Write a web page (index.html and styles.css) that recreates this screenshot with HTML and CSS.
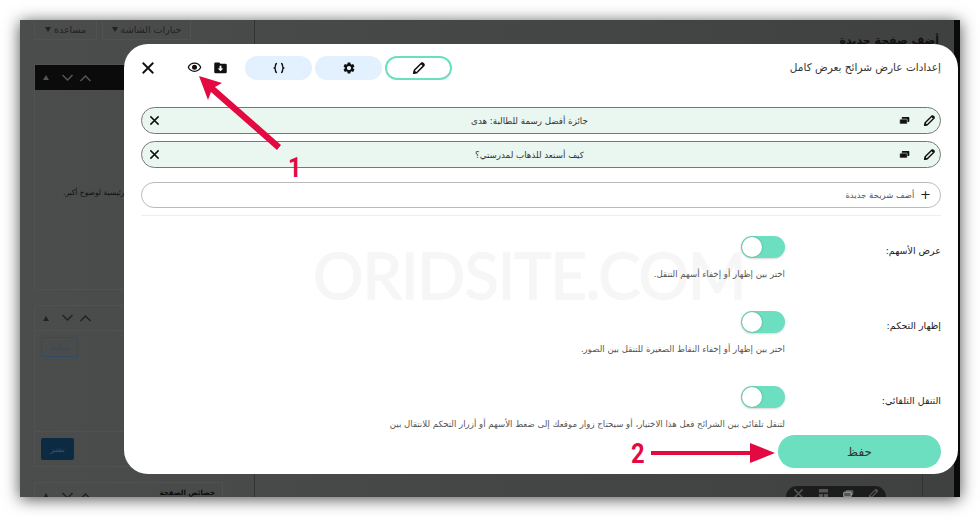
FILE: index.html
```html
<!DOCTYPE html>
<html lang="ar" dir="rtl">
<head>
    <meta charset="utf-8">
    <title>إعدادات عارض شرائح بعرض كامل</title>
    <link rel="stylesheet" href="styles.css">
</head>
<body>
    <!-- shared icons -->
    <svg class="icon-defs" width="0" height="0">
        <symbol id="i-close" viewBox="0 0 12 12"><path d="M1.5 1.5l9 9M10.5 1.5l-9 9" fill="none" stroke="currentColor" stroke-width="1.6"/></symbol>
        <symbol id="i-pencil" viewBox="0 0 24 24"><path d="M16.5 3.5l4 4L8 20l-5 1 1-5z" fill="none" stroke="currentColor" stroke-width="2.6" stroke-linejoin="round"/><path d="M2.5 21.5l1.2-6 4.8 4.8zM15 5l2-2.4a1.6 1.6 0 0 1 2.2 0l2.2 2.2a1.6 1.6 0 0 1 0 2.2L19 9z" fill="currentColor"/></symbol>
        <symbol id="i-copy" viewBox="0 0 16 12"><path d="M5 1h9a1 1 0 0 1 1 1v5a1 1 0 0 1-1 1H5a1 1 0 0 1-1-1V2a1 1 0 0 1 1-1z" fill="currentColor"/><path d="M2 4h9a1 1 0 0 1 1 1v5a1 1 0 0 1-1 1H2a1 1 0 0 1-1-1V5a1 1 0 0 1 1-1z" fill="currentColor" stroke="#eaf7f1" stroke-width=".8"/></symbol>
        <symbol id="i-grid" viewBox="0 0 12 12"><path d="M1 1h10v4H1zM1 6.500h4.500V11H1zM6.500 6.500H11V11H6.500z" fill="currentColor"/></symbol>
        <symbol id="i-up" viewBox="0 0 12 8"><path d="M1 7l5-5 5 5" fill="none" stroke="currentColor" stroke-width="1.5"/></symbol>
        <symbol id="i-down" viewBox="0 0 12 8"><path d="M1 1l5 5 5-5" fill="none" stroke="currentColor" stroke-width="1.5"/></symbol>
    </svg>

    <div class="screen">
        <div class="wp-page">
            <div class="wp-main">
                <div class="wp-heading">أضف صفحة جديدة</div>
                <div class="wp-blocktools">
                    <svg class="tool-ico"><use href="#i-pencil"/></svg>
                    <svg class="tool-ico"><use href="#i-copy"/></svg>
                    <svg class="tool-ico"><use href="#i-grid"/></svg>
                    <svg class="tool-ico"><use href="#i-close"/></svg>
                </div>
            </div>
            <div class="wp-side">
                <div class="wp-tabs">
                    <span class="wp-tab wp-tab-wide">خيارات الشاشة <i class="caret"></i></span>
                    <span class="wp-tab">مساعدة <i class="caret"></i></span>
                </div>
                <div class="wp-box wp-box-first">
                    <div class="wp-box-head wp-box-head-dark">
                        <svg class="chev"><use href="#i-up"/></svg>
                        <svg class="chev"><use href="#i-down"/></svg>
                        <i class="tri"></i>
                    </div>
                    <div class="wp-box-note">الصورة الرئيسية لوضوح أكبر.</div>
                </div>
                <div class="wp-box wp-box-publish">
                    <div class="wp-box-head">
                        <svg class="chev"><use href="#i-up"/></svg>
                        <svg class="chev"><use href="#i-down"/></svg>
                        <i class="tri"></i>
                    </div>
                    <div class="wp-box-body"><span class="wp-preview">معاينة</span></div>
                    <div class="wp-box-foot"><span class="wp-publish">نشر</span></div>
                </div>
                <div class="wp-box">
                    <div class="wp-box-head wp-box-head-title">
                        <span class="wp-box-title">خصائص الصفحة</span>
                        <svg class="chev"><use href="#i-up"/></svg>
                        <svg class="chev"><use href="#i-down"/></svg>
                        <i class="tri"></i>
                    </div>
                </div>
            </div>
        </div>

        <!-- slider settings modal -->
        <div class="modal">
            <div class="watermark" dir="ltr">ORIDSITE.COM</div>

            <div class="modal-head">
                <div class="modal-title">إعدادات عارض شرائح بعرض كامل</div>
                <div class="modal-tabs">
                    <span class="tab tab-active"><svg class="ico-14"><use href="#i-pencil"/></svg></span>
                    <span class="tab">
                        <svg class="ico-14" viewBox="0 0 24 24"><path fill="currentColor" d="M19.14 12.94c.04-.3.06-.61.06-.94 0-.32-.02-.64-.07-.94l2.03-1.58c.18-.14.23-.41.12-.61l-1.92-3.32c-.12-.22-.37-.29-.59-.22l-2.39.96c-.5-.38-1.03-.7-1.62-.94l-.36-2.54c-.04-.24-.24-.41-.48-.41h-3.84c-.24 0-.43.17-.47.41l-.36 2.54c-.59.24-1.13.57-1.62.94l-2.39-.96c-.22-.08-.47 0-.59.22L2.74 8.87c-.12.21-.08.47.12.61l2.03 1.58c-.05.3-.09.63-.09.94s.02.64.07.94l-2.03 1.58c-.18.14-.23.41-.12.61l1.92 3.32c.12.22.37.29.59.22l2.39-.96c.5.38 1.03.7 1.62.94l.36 2.54c.05.24.24.41.48.41h3.84c.24 0 .44-.17.47-.41l.36-2.54c.59-.24 1.13-.56 1.62-.94l2.39.96c.22.08.47 0 .59-.22l1.92-3.32c.12-.22.07-.47-.12-.61l-2.01-1.58zM12 15.6c-1.98 0-3.6-1.62-3.6-3.6s1.62-3.6 3.6-3.6 3.6 1.62 3.6 3.6-1.62 3.6-3.6 3.6z"/></svg>
                    </span>
                    <span class="tab">
                        <svg class="ico-braces" viewBox="0 0 12 12"><path d="M4 1.5c-1.5 0-1.5 1-1.5 2s0 2-1 2.5c1 .5 1 1.500 1 2.500s0 2 1.500 2M8 1.500c1.500 0 1.500 1 1.500 2s0 2 1 2.500c-1 .5-1 1.500-1 2.500s0 2-1.500 2" fill="none" stroke="currentColor" stroke-width="1.400"/></svg>
                    </span>
                </div>
                <div class="modal-actions">
                    <svg class="ico-15" viewBox="0 0 24 24"><path fill="currentColor" d="M10 4H4a2 2 0 0 0-2 2v13a2 2 0 0 0 2 2h16a2 2 0 0 0 2-2V8a2 2 0 0 0-2-2h-8z"/><path fill="#fff" d="M10.500 9h3v4.500H16.500L12 18l-4.500-4.500h3z"/></svg>
                    <svg class="ico-15" viewBox="0 0 24 24"><path fill="currentColor" d="M12 6a9.770 9.770 0 0 1 8.820 5.500C19.170 14.870 15.790 17 12 17s-7.170-2.130-8.820-5.500A9.770 9.770 0 0 1 12 6m0-2C7 4 2.730 7.110 1 11.500 2.730 15.890 7 19 12 19s9.270-3.110 11-7.500C21.270 7.110 17 4 12 4z"/><circle cx="12" cy="11.500" r="4" fill="currentColor"/></svg>
                    <svg class="ico-close"><use href="#i-close"/></svg>
                </div>
            </div>

            <div class="slides">
                <div class="slide">
                    <span class="slide-tools">
                        <svg class="ico-12"><use href="#i-pencil"/></svg>
                        <svg class="ico-copy"><use href="#i-copy"/></svg>
                    </span>
                    <span class="slide-name">جائزة أفضل رسمة للطالبة: هدى</span>
                    <svg class="ico-x"><use href="#i-close"/></svg>
                </div>
                <div class="slide">
                    <span class="slide-tools">
                        <svg class="ico-12"><use href="#i-pencil"/></svg>
                        <svg class="ico-copy"><use href="#i-copy"/></svg>
                    </span>
                    <span class="slide-name">كيف أستعد للذهاب لمدرستي؟</span>
                    <svg class="ico-x"><use href="#i-close"/></svg>
                </div>
                <div class="slide-add"><span class="plus">+</span> أضف شريحة جديدة</div>
            </div>

            <div class="settings">
                <div class="setting">
                    <label class="setting-label">عرض الأسهم:</label>
                    <div>
                        <span class="toggle"></span>
                        <p class="setting-desc">اختر بين إظهار أو إخفاء أسهم التنقل.</p>
                    </div>
                </div>
                <div class="setting">
                    <label class="setting-label">إظهار التحكم:</label>
                    <div>
                        <span class="toggle"></span>
                        <p class="setting-desc">اختر بين إظهار أو إخفاء النقاط الصغيرة للتنقل بين الصور.</p>
                    </div>
                </div>
                <div class="setting">
                    <label class="setting-label">التنقل التلقائي:</label>
                    <div>
                        <span class="toggle"></span>
                        <p class="setting-desc">لتنقل تلقائي بين الشرائح فعل هذا الاختيار، أو سيحتاج زوار موقعك إلى ضغط الأسهم أو أزرار التحكم للانتقال بين</p>
                    </div>
                </div>
            </div>

            <button class="save">حفظ</button>
        </div>

        <!-- tutorial arrows on top of the screenshot -->
        <svg class="marks" viewBox="0 0 940 477">
            <path d="M179 56l23 7-7 4 66 58-4 5-66-58-3 8z" fill="#e20a40"/>
            <path d="M631 431h99v-8l25 10-25 10v-8h-99z" fill="#e20a40"/>
        </svg>
        <span class="mark-num mark-one">1</span>
        <span class="mark-num mark-two">2</span>
    </div>
</body>
</html>
```

FILE: styles.css
```css
* { box-sizing: border-box; }

html, body { margin: 0; height: 517px; overflow: hidden; }
body {
    background: #fff;
    font-family: "DejaVu Sans", sans-serif;
    padding: 20px;
}
.icon-defs { position: absolute; }

.screen {
    position: relative;
    width: 940px;
    height: 477px;
    background: linear-gradient(to right, #4b4d4c, #3f4040);
    box-shadow: 0 2px 15px rgba(0,0,0,0.7);
    overflow: hidden;
}

/* dimmed wordpress page behind the modal */
.wp-page { display: flex; height: 100%; }
.wp-main {
    flex: 1;
    border-left: 1px solid #333;
    border-right: 6px solid #0a0a0a;
    margin-left: 31px;
    padding: 13px 15px 0 0;
    position: relative;
}
.wp-main::after {
    content: "";
    position: absolute;
    left: 667px;
    bottom: 0;
    width: 1px;
    height: 30px;
    background: #333;
}
.wp-heading { font-size: 11px; color: #111; font-weight: bold; line-height: 16px; }
.wp-blocktools {
    position: absolute;
    left: 531px;
    bottom: 0;
    width: 100px;
    height: 11px;
    background: #1c1c1c;
    border-radius: 11px 11px 0 0;
    display: flex;
    justify-content: space-around;
    align-items: flex-start;
    padding-top: 2px;
    color: #555;
}
.tool-ico { width: 11px; height: 11px; }

.wp-side { width: 189px; margin-left: 14px; flex: none; }
.wp-tabs { display: flex; gap: 5px; justify-content: flex-end; height: 44px; }
.wp-tab {
    width: 63px;
    height: 20px;
    border: 1px solid #505251;
    border-top: 0;
    font-size: 9.5px;
    line-height: 19px;
    color: #222;
    text-align: center;
    white-space: nowrap;
}
.wp-tab-wide { width: 89px; }
.caret {
    display: inline-block;
    border: 3px solid transparent;
    border-top: 5px solid #222;
    border-bottom: 0;
    vertical-align: 1px;
}
.wp-box { border: 1px solid #505251; margin-bottom: 15px; }
.wp-box-first { height: 226px; }
.wp-box-publish { height: 162px; }
.wp-box-head {
    height: 25px;
    display: flex;
    align-items: center;
    justify-content: flex-end;
    gap: 5px;
    padding-left: 8px;
    color: #222;
    border-bottom: 1px solid #505251;
}
.wp-box-head-dark { background: #0b0b0b; color: #555; border: 0; }
.wp-box-head-title { border: 0; }
.wp-box-title {
    align-self: flex-start;
    font-size: 7px;
    line-height: 21px;
    font-weight: bold;
    color: #0c0c0c;
    margin-left: auto;
    padding-right: 7px;
}
.chev { width: 13px; height: 8px; }
.tri {
    border: 3px solid transparent;
    border-bottom: 5px solid currentColor;
    border-top: 0;
    margin-right: 7px;
}
.wp-box-note {
    font-size: 7.5px;
    line-height: 12px;
    color: #111;
    margin: 97px 0 0 28px;
    text-align: left;
    white-space: nowrap;
}
.wp-box-body { height: 100px; padding: 6px 144px 0 0; }
.wp-preview {
    display: block;
    width: 37px;
    height: 20px;
    border: 1px solid #2f4b66;
    border-radius: 2px;
    color: #2f4b66;
    font-size: 8.5px;
    line-height: 18px;
    text-align: center;
}
.wp-box-foot { border-top: 1px solid #505251; padding: 6px 148px 0 0; }
.wp-publish {
    display: block;
    width: 33px;
    height: 22px;
    background: #0c2a42;
    border-radius: 2px;
    color: #35556c;
    font-size: 8.5px;
    line-height: 22px;
    text-align: center;
}

/* modal */
.modal {
    position: absolute;
    left: 104px;
    top: 24px;
    width: 834px;
    height: 430px;
    background: #fff;
    border-radius: 24px;
    padding: 0 17px;
    color: #222;
    overflow: hidden;
}
.watermark {
    position: absolute;
    left: 189px;
    top: 196px;
    font-family: Lato, sans-serif;
    font-size: 63px;
    line-height: 70px;
    letter-spacing: -1px;
    color: #f6f6f6;
    -webkit-text-stroke: 1.5px #f6f6f6;
    white-space: nowrap;
}

.modal-head { height: 63px; display: flex; align-items: flex-start; position: relative; }
.modal-title { font-size: 10.5px; line-height: 46px; color: #333; margin-left: auto; }
.modal-tabs { display: flex; gap: 3px; margin-top: 12px; margin-left: 17px; }
.tab {
    width: 67px;
    height: 24px;
    background: #e3f0fe;
    border-radius: 12px;
    display: flex;
    align-items: center;
    justify-content: center;
    color: #111;
}
.tab-active { background: #fff; border: 2px solid #6bdfc0; }
.ico-14 { width: 14px; height: 14px; }
.ico-braces { width: 12px; height: 12px; }
.modal-actions { display: flex; align-items: center; margin-top: 16px; color: #111; }
.ico-15 { width: 15px; height: 15px; margin-left: 11px; }
.ico-close { width: 14px; height: 14px; margin-right: 21px; }

.slides { padding-bottom: 7px; border-bottom: 1px solid #eee; }
.slide {
    height: 27px;
    margin-bottom: 7px;
    background: #eaf7f1;
    border: 1px solid #777;
    border-bottom-width: 1.5px;
    border-radius: 14px;
    display: flex;
    align-items: center;
    padding: 0 4px 0 7px;
}
.slide-tools { display: flex; align-items: center; gap: 13px; width: 45px; flex: none; color: #111; }
.ico-12 { width: 13px; height: 13px; }
.ico-copy { width: 11px; height: 9px; }
.slide-name { flex: 1; text-align: center; font-size: 8.7px; color: #333; padding-left: 8px; }
.ico-x { width: 11px; height: 11px; color: #111; }
.slide-add {
    height: 26px;
    margin-top: 14px;
    border: 1px solid #bbb;
    border-bottom-width: 1.5px;
    border-radius: 14px;
    font-size: 8.5px;
    line-height: 24px;
    padding-right: 9px;
    color: #555;
}
.plus { font-size: 13px; color: #222; margin-left: 3px; vertical-align: -1px; }

.settings { padding-top: 20px; position: relative; }
.setting { display: grid; grid-template-columns: 156px 1fr; height: 75px; }
.setting-label { font-size: 9.5px; line-height: 29px; color: #222; }
.toggle {
    display: block;
    width: 44px;
    height: 22px;
    border-radius: 11px;
    background: #6bdfc0;
    position: relative;
    box-shadow: 0 1px 2px rgba(0,0,0,0.15);
}
.toggle::after {
    content: "";
    position: absolute;
    left: 1px;
    top: 1px;
    width: 20px;
    height: 20px;
    border-radius: 50%;
    background: #fff;
    box-shadow: 0 0 2px rgba(0,0,0,0.3);
}
.setting-desc {
    margin: 10px 0 0;
    font-size: 8.6px;
    line-height: 12px;
    color: #555;
    white-space: nowrap;
    overflow: hidden;
}

.save {
    position: absolute;
    left: 654px;
    top: 391px;
    width: 163px;
    height: 33px;
    background: #6bdfc0;
    border: 0;
    border-radius: 17px;
    font-family: inherit;
    font-size: 12px;
    color: #333;
}

/* annotations */
.marks { position: absolute; left: 0; top: 0; width: 940px; height: 477px; }
.mark-num {
    position: absolute;
    font-family: Roboto, sans-serif;
    font-weight: 700;
    font-size: 27px;
    line-height: 28px;
    color: #e20a40;
    transform: scaleX(0.88);
    transform-origin: left center;
}
.mark-one { left: 268px; top: 134px; }
.mark-two { left: 611px; top: 420px; }
```
